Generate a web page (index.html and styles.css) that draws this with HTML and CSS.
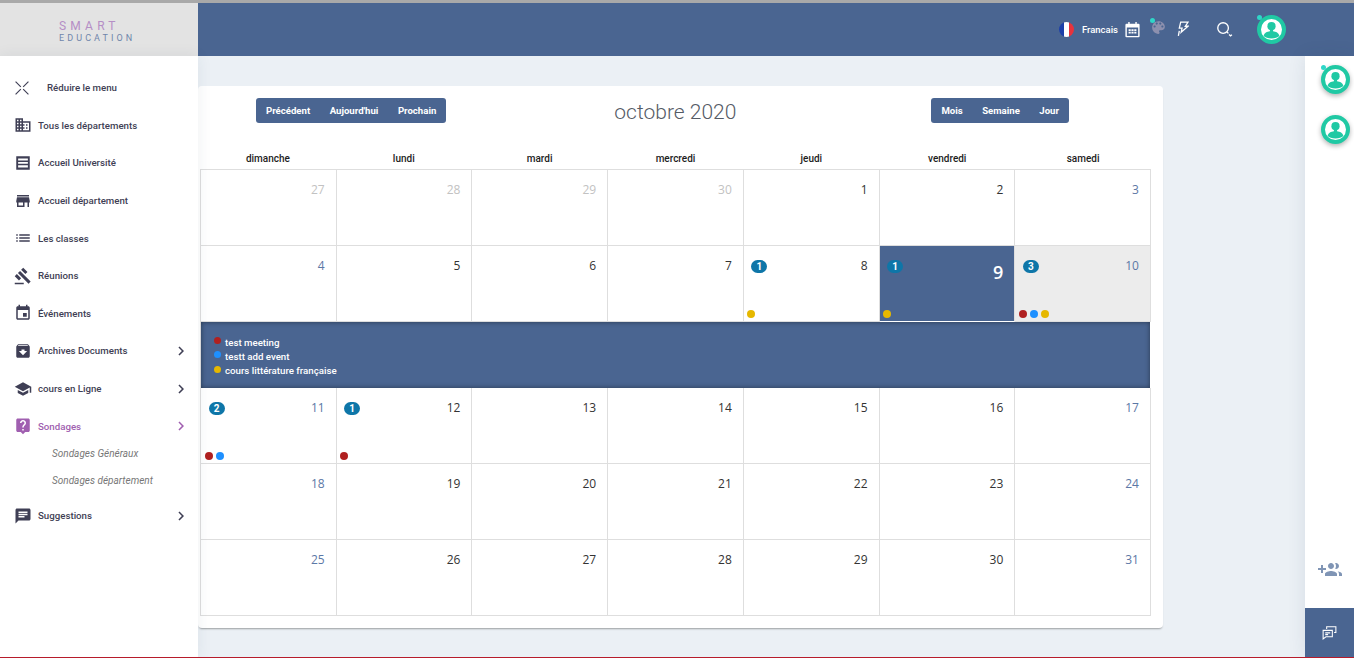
FILE: index.html
```html
<!DOCTYPE html>
<html lang="fr">
<head>
  <meta charset="UTF-8">
  <meta name="viewport" content="width=device-width, initial-scale=1.0">
  <title>Smart Education - Calendrier</title>
  <link rel="stylesheet" href="styles.css">
</head>
<body>
  <svg class="icon-defs" width="0" height="0">
    <symbol id="avatar" viewBox="0 0 24 24">
      <circle cx="12" cy="8.2" r="4.700"/>
      <path d="M3 19.500c.4-3.600 4.200-5 7.200-5.400v-1.600h3.600v1.600c3 .4 6.800 1.800 7.200 5.400-2 1.700-5 2.700-9 2.700s-7-1-9-2.700z"/>
    </symbol>
    <symbol id="chevron" viewBox="0 0 24 24">
      <path d="M8.590 16.590L13.170 12 8.590 7.410 10 6l6 6-6 6z"/>
    </symbol>
  </svg>

  <!-- Header -->
  <header class="topbar">
    <div class="logo">
      <span class="logo-smart">SMART</span>
      <span class="logo-edu">EDUCATION</span>
    </div>
    <div class="topbar-tools">
      <span class="flag"></span>
      <span class="lang">Francais</span>
      <svg class="tool tool-cal" viewBox="0 0 24 24"><path d="M6 1.500h2v2.500h8V1.500h2V4h2.500A1.500 1.500 0 0 1 22 5.500v16a1.500 1.500 0 0 1-1.500 1.500h-17A1.500 1.500 0 0 1 2 21.500v-16A1.500 1.500 0 0 1 3.500 4H6zM4 9v12h16V9zm2.500 2.500h3v2.500h-3zm4 0h3v2.500h-3zm4 0h3v2.500h-3zm-8 3.500h3v2.500h-3zm4 0h3v2.500h-3zm4 0h3v2.500h-3z" fill-rule="evenodd"/></svg>
      <span class="palette">
        <svg viewBox="0 0 24 24"><path d="M12 3c-4.970 0-9 4.030-9 9s4.030 9 9 9c.83 0 1.500-.67 1.500-1.500 0-.39-.15-.74-.39-1.010-.23-.26-.38-.61-.38-.99 0-.83.67-1.500 1.500-1.500H16c2.760 0 5-2.240 5-5 0-4.420-4.030-8-9-8zm-5.500 9c-.83 0-1.500-.67-1.500-1.500S5.670 9 6.500 9 8 9.670 8 10.500 7.330 12 6.500 12zm3-4C8.670 8 8 7.330 8 6.500S8.670 5 9.500 5s1.500.67 1.500 1.500S10.330 8 9.500 8zm5 0c-.83 0-1.500-.67-1.500-1.500S13.670 5 14.500 5s1.500.67 1.500 1.500S15.330 8 14.500 8zm3 4c-.83 0-1.500-.67-1.500-1.500S16.670 9 17.500 9s1.500.67 1.500 1.500-.67 1.500-1.500 1.500z"/></svg>
        <i class="online"></i>
      </span>
      <svg class="tool tool-bolt" viewBox="0 0 13 17" fill="none" stroke="#fff" stroke-width="1.400"><path d="M4 1h8L9 5.500h3L4.500 12l1-4.500H2.500zM2.500 10.500L1.500 16"/></svg>
      <svg class="tool tool-search" viewBox="0 0 24 24" fill="none" stroke="#fff" stroke-width="1.900"><circle cx="10" cy="10" r="7.500"/><path d="M15.500 15.500l2 2M18.500 19l2 2 2-1.500"/></svg>
      <span class="avatar avatar-top">
        <svg><use href="#avatar"/></svg>
        <i class="online"></i>
      </span>
    </div>
  </header>

  <div class="layout">
    <!-- Menu -->
    <aside class="sidebar">
      <a class="menu-item menu-toggle">
        <svg class="menu-icon" viewBox="0 0 24 24" fill="none" stroke="#3f3f55" stroke-width="2"><path d="M1 1l9 9M23 1l-9 9M1 23l9-9M23 23l-9-9"/></svg>
        <span>Réduire le menu</span>
      </a>
      <a class="menu-item">
        <svg class="menu-icon" viewBox="0 0 24 24"><path d="M12 7V3H2v18h20V7H12zM6 19H4v-2h2v2zm0-4H4v-2h2v2zm0-4H4V9h2v2zm0-4H4V5h2v2zm4 12H8v-2h2v2zm0-4H8v-2h2v2zm0-4H8V9h2v2zm0-4H8V5h2v2zm10 12h-8v-2h2v-2h-2v-2h2v-2h-2V9h8v10zm-2-8h-2v2h2v-2zm0 4h-2v2h2v-2z"/></svg>
        <span>Tous les départements</span>
      </a>
      <a class="menu-item">
        <svg class="menu-icon" viewBox="0 0 24 24"><path fill-rule="evenodd" d="M3 3h18v18H3zM5.500 6v2.500h13V6zm0 4.500V13h13v-2.500zm0 4.500v3h13v-3z"/></svg>
        <span>Accueil Université</span>
      </a>
      <a class="menu-item">
        <svg class="menu-icon" viewBox="0 0 24 24"><path d="M20 4H4v2h16V4zm1 10v-2l-1-5H4l-1 5v2h1v6h10v-6h4v6h2v-6h1zm-9 4H6v-4h6v4z"/></svg>
        <span>Accueil département</span>
      </a>
      <a class="menu-item">
        <svg class="menu-icon" viewBox="0 0 24 24"><path d="M3 13h2v-2H3v2zm0 4h2v-2H3v2zm0-8h2V7H3v2zm4 4h14v-2H7v2zm0 4h14v-2H7v2zM7 7v2h14V7H7z"/></svg>
        <span>Les classes</span>
      </a>
      <a class="menu-item">
        <svg class="menu-icon" viewBox="0 0 24 24"><path d="M1 21h12v2H1zM5.245 8.070l2.830-2.827 14.140 14.142-2.828 2.828zM12.317 1l5.657 5.656-2.830 2.830-5.654-5.660zM3.825 9.485l5.657 5.657-2.828 2.828-5.657-5.657z"/></svg>
        <span>Réunions</span>
      </a>
      <a class="menu-item">
        <svg class="menu-icon" viewBox="0 0 24 24"><path d="M17 12h-5v5h5v-5zM16 1v2H8V1H6v2H5c-1.110 0-1.990.9-1.990 2L3 19c0 1.100.89 2 2 2h14c1.100 0 2-.9 2-2V5c0-1.100-.9-2-2-2h-1V1h-2zm3 18H5V8h14v11z"/></svg>
        <span>Événements</span>
      </a>
      <a class="menu-item">
        <svg class="menu-icon" viewBox="0 0 24 24"><path d="M20.540 5.230l-1.390-1.680C18.880 3.210 18.470 3 18 3H6c-.47 0-.88.21-1.160.55L3.460 5.230C3.170 5.570 3 6.020 3 6.500V19c0 1.100.9 2 2 2h14c1.100 0 2-.9 2-2V6.500c0-.48-.17-.93-.46-1.270zM12 17.500L6.500 12H10v-2h4v2h3.500L12 17.500zM5.120 5l.81-1h12l.94 1H5.120z"/></svg>
        <span>Archives Documents</span>
        <svg class="chevron"><use href="#chevron"/></svg>
      </a>
      <a class="menu-item">
        <svg class="menu-icon" viewBox="0 0 24 24"><path d="M5 13.180v4L12 21l7-3.820v-4L12 17l-7-3.820zM12 3L1 9l11 6 9-4.910V17h2V9L12 3z"/></svg>
        <span>cours en Ligne</span>
        <svg class="chevron"><use href="#chevron"/></svg>
      </a>
      <a class="menu-item active">
        <svg class="menu-icon" viewBox="0 0 24 24"><path d="M19 2H5c-1.110 0-2 .9-2 2v14c0 1.100.89 2 2 2h4l3 3 3-3h4c1.100 0 2-.9 2-2V4c0-1.100-.9-2-2-2zm-6 16h-2v-2h2v2zm2.070-7.750l-.9.92C13.450 11.900 13 12.500 13 14h-2v-.5c0-1.100.45-2.100 1.170-2.830l1.240-1.260c.37-.36.59-.86.59-1.410 0-1.100-.9-2-2-2s-2 .9-2 2H8c0-2.210 1.790-4 4-4s4 1.790 4 4c0 .88-.36 1.680-.93 2.250z"/></svg>
        <span>Sondages</span>
        <svg class="chevron"><use href="#chevron"/></svg>
      </a>
      <div class="submenu">
        <a>Sondages Généraux</a>
        <a>Sondages département</a>
      </div>
      <a class="menu-item">
        <svg class="menu-icon" viewBox="0 0 24 24"><path d="M20 2H4c-1.100 0-1.990.9-1.990 2L2 22l4-4h14c1.100 0 2-.9 2-2V4c0-1.100-.9-2-2-2zM6 9h12v2H6V9zm8 5H6v-2h8v2zm4-6H6V6h12v2z"/></svg>
        <span>Suggestions</span>
        <svg class="chevron"><use href="#chevron"/></svg>
      </a>
    </aside>

    <main class="content">
      <section class="card">
        <div class="cal-toolbar">
          <div class="btn-group">
            <button>Précédent</button>
            <button>Aujourd'hui</button>
            <button>Prochain</button>
          </div>
          <h2 class="cal-title">octobre 2020</h2>
          <div class="btn-group">
            <button>Mois</button>
            <button>Semaine</button>
            <button>Jour</button>
          </div>
        </div>

        <div class="cal-days">
          <span>dimanche</span><span>lundi</span><span>mardi</span><span>mercredi</span><span>jeudi</span><span>vendredi</span><span>samedi</span>
        </div>

        <div class="cal-grid">
          <div class="cell muted"><b class="num">27</b></div>
          <div class="cell muted"><b class="num">28</b></div>
          <div class="cell muted"><b class="num">29</b></div>
          <div class="cell muted"><b class="num">30</b></div>
          <div class="cell"><b class="num">1</b></div>
          <div class="cell"><b class="num">2</b></div>
          <div class="cell weekend"><b class="num">3</b></div>

          <div class="cell weekend"><b class="num">4</b></div>
          <div class="cell"><b class="num">5</b></div>
          <div class="cell"><b class="num">6</b></div>
          <div class="cell"><b class="num">7</b></div>
          <div class="cell">
            <span class="badge">1</span><b class="num">8</b>
            <div class="dots"><i class="dot yellow"></i></div>
          </div>
          <div class="cell today">
            <span class="badge">1</span><b class="num">9</b>
            <div class="dots"><i class="dot yellow"></i></div>
          </div>
          <div class="cell weekend selected">
            <span class="badge">3</span><b class="num">10</b>
            <div class="dots"><i class="dot red"></i><i class="dot blue"></i><i class="dot yellow"></i></div>
          </div>

          <div class="event-panel">
            <div class="event-line"><i class="dot red"></i>test meeting</div>
            <div class="event-line"><i class="dot blue"></i>testt add event</div>
            <div class="event-line"><i class="dot yellow"></i>cours littérature française</div>
          </div>

          <div class="cell weekend">
            <span class="badge">2</span><b class="num">11</b>
            <div class="dots"><i class="dot red"></i><i class="dot blue"></i></div>
          </div>
          <div class="cell">
            <span class="badge">1</span><b class="num">12</b>
            <div class="dots"><i class="dot red"></i></div>
          </div>
          <div class="cell"><b class="num">13</b></div>
          <div class="cell"><b class="num">14</b></div>
          <div class="cell"><b class="num">15</b></div>
          <div class="cell"><b class="num">16</b></div>
          <div class="cell weekend"><b class="num">17</b></div>

          <div class="cell weekend"><b class="num">18</b></div>
          <div class="cell"><b class="num">19</b></div>
          <div class="cell"><b class="num">20</b></div>
          <div class="cell"><b class="num">21</b></div>
          <div class="cell"><b class="num">22</b></div>
          <div class="cell"><b class="num">23</b></div>
          <div class="cell weekend"><b class="num">24</b></div>

          <div class="cell weekend"><b class="num">25</b></div>
          <div class="cell"><b class="num">26</b></div>
          <div class="cell"><b class="num">27</b></div>
          <div class="cell"><b class="num">28</b></div>
          <div class="cell"><b class="num">29</b></div>
          <div class="cell"><b class="num">30</b></div>
          <div class="cell weekend"><b class="num">31</b></div>
        </div>
      </section>
    </main>

    <!-- Contacts -->
    <aside class="contacts">
      <span class="avatar">
        <svg><use href="#avatar"/></svg>
        <i class="online"></i>
      </span>
      <span class="avatar">
        <svg><use href="#avatar"/></svg>
      </span>
      <svg class="add-group" viewBox="0 0 24 24"><path d="M8 10H5V7H3v3H0v2h3v3h2v-3h3v-2zm10 1c1.660 0 2.990-1.340 2.990-3S19.660 5 18 5c-.32 0-.63.05-.91.14.57.81.9 1.790.9 2.860s-.34 2.040-.9 2.860c.28.09.59.14.91.14zm-5 0c1.660 0 2.990-1.340 2.990-3S14.660 5 13 5s-3 1.340-3 3 1.340 3 3 3zm6.620 2.160c.83.73 1.380 1.660 1.380 2.840v2h3v-2c0-1.540-2.370-2.490-4.380-2.840zM13 13c-2 0-6 1-6 3v2h12v-2c0-2-4-3-6-3z"/></svg>
      <div class="chat-btn">
        <svg viewBox="0 0 24 24" fill="none" stroke="#fff" stroke-width="1.500"><path d="M8 7V4h13v8l-2.500 0"/><path d="M3 9h13v9H7l-4 3z" fill="#4a6591"/><path d="M6 12.500h7M6 15h4"/></svg>
      </div>
    </aside>
  </div>
</body>
</html>
```

FILE: styles.css
```css
* {
  box-sizing: border-box;
}

html,
body {
  height: 100%;
}

body {
  margin: 0;
  display: flex;
  flex-direction: column;
  overflow: hidden;
  border-top: 3px solid #a9a9a9;
  border-bottom: 1px solid #b71c2b;
  background: #ebf0f5;
  font-family: Roboto, "Liberation Sans", sans-serif;
  font-size: 10px;
}

.icon-defs {
  position: absolute;
}

/* Header */
.topbar {
  display: flex;
  justify-content: space-between;
  height: 53px;
  background: #4a6591;
  flex-shrink: 0;
}

.logo {
  width: 198px;
  padding: 16px 0 0 59px;
  display: flex;
  flex-direction: column;
  background: #e3e3e3;
}

.logo-smart {
  font-size: 12px;
  line-height: 14px;
  letter-spacing: 4.200px;
  color: #b58ec6;
}

.logo-edu {
  font-size: 9px;
  line-height: 11px;
  letter-spacing: 3.100px;
  color: #6f86ab;
}

.topbar-tools {
  display: flex;
  align-items: center;
  padding: 0 68px 1px 0;
  color: #fff;
}

.flag {
  width: 15px;
  height: 15px;
  border-radius: 50%;
  background: linear-gradient(90deg, #1c3fa8 33%, #fff 33%, #fff 66%, #e8323c 66%);
}

.lang {
  margin-left: 8px;
  font-size: 9.500px;
  font-weight: 500;
}

.tool {
  fill: #fff;
  flex-shrink: 0;
}

.tool-cal {
  width: 17px;
  height: 17px;
  margin-left: 6px;
}

.palette {
  position: relative;
  width: 17px;
  height: 17px;
  margin: -3px 0 0 9px;
  fill: #8d90ae;
}

.palette svg {
  width: 17px;
  height: 17px;
}

.palette .online {
  top: -1px;
  left: 0;
}

.tool-bolt {
  width: 12px;
  height: 16px;
  margin-left: 10px;
  fill: none;
}

.tool-search {
  width: 17px;
  height: 17px;
  margin-left: 27px;
  fill: none;
}

.avatar {
  position: relative;
  display: block;
  width: 29px;
  height: 29px;
  padding: 4px;
  border: 4px solid #20c9a4;
  border-radius: 50%;
  background: #fff;
  fill: #20c9a4;
  box-shadow: 0 2px 5px rgba(0, 0, 0, 0.3);
}

.avatar svg {
  display: block;
  width: 21px;
  height: 21px;
  margin: -4px;
}

.avatar-top {
  margin-left: 24px;
  box-shadow: none;
}

.online {
  position: absolute;
  top: -4px;
  left: -4px;
  width: 5px;
  height: 5px;
  border-radius: 50%;
  background: #2fd6c8;
}

.layout {
  flex: 1;
  display: flex;
  min-height: 0;
}

/* Menu */
.sidebar {
  position: relative;
  z-index: 2;
  width: 198px;
  padding-top: 13px;
  background: #fff;
  box-shadow: 0 0 14px rgba(40, 60, 90, 0.08);
  flex-shrink: 0;
}

.menu-item {
  display: flex;
  align-items: center;
  height: 37.600px;
  padding: 0 8px 0 14px;
  font-size: 9.700px;
  font-weight: 500;
  color: #3f3f55;
}

.menu-icon {
  width: 18px;
  height: 18px;
  margin-right: 6px;
  fill: #3f3f55;
  flex-shrink: 0;
}

.menu-toggle .menu-icon {
  width: 14px;
  height: 14px;
  margin: 0 18px 0 1px;
}

.chevron {
  width: 18px;
  height: 18px;
  margin-left: auto;
  fill: #3f3f55;
}

.menu-item.active {
  color: #a05fb0;
}

.active .menu-icon,
.active .chevron {
  fill: #a05fb0;
}

.submenu {
  display: flex;
  flex-direction: column;
  margin: -4px 0 2px;
  padding-left: 52px;
  font-style: italic;
  color: #777;
}

.submenu a {
  height: 27px;
  line-height: 26px;
}

/* Calendar */
.content {
  flex: 1;
  min-width: 0;
  padding: 30px 142px 0 0;
}

.card {
  height: 542px;
  padding: 12px 12px 0 2px;
  border-radius: 4px;
  background: #fff;
  box-shadow: 0 2px 2px -1px rgba(0, 0, 0, 0.35);
}

.cal-toolbar {
  display: flex;
  align-items: center;
  height: 25px;
  padding: 0 82px 0 56px;
}

.btn-group {
  display: flex;
  height: 25px;
  padding: 0 10px;
  gap: 19.500px;
  border-radius: 3px;
  background: #4a6591;
}

.btn-group button {
  padding: 0;
  border: 0;
  background: none;
  font: 700 9.600px Roboto, sans-serif;
  color: #fff;
}

.cal-title {
  flex: 1;
  margin: 2px 0 0;
  padding-right: 27px;
  text-align: center;
  font-size: 21px;
  font-weight: 300;
  color: #555b66;
}

.cal-days {
  display: grid;
  grid-template-columns: repeat(7, 1fr);
  height: 21px;
  margin-top: 25px;
  padding-top: 5px;
  text-align: center;
  font-weight: 500;
  color: #1d1d1d;
}

.cal-grid {
  display: grid;
  grid-template-columns: repeat(7, 1fr);
  border-top: 1px solid #dedede;
  border-left: 1px solid #dedede;
}

.cell {
  position: relative;
  height: 76px;
  padding: 12px 11px 0 7.500px;
  display: flex;
  align-items: flex-start;
  border-right: 1px solid #dedede;
  border-bottom: 1px solid #dedede;
}

.num {
  margin-left: auto;
  font: 400 12px/16px "Open Sans", sans-serif;
  color: #333;
}

.muted .num {
  color: #c2c2c2;
}

.weekend .num {
  color: #5c78a6;
}

.today {
  background: #4a6591;
  border-bottom-color: #fff;
}

.today .num {
  font-size: 18px;
  line-height: 22px;
  font-weight: 600;
  color: #fff;
  margin-top: 3px;
}

.selected {
  background: #ececec;
}

.badge {
  width: 16px;
  height: 13px;
  margin-top: 2px;
  border-radius: 7px;
  background: #0e76a8;
  text-align: center;
  font-size: 10px;
  line-height: 13px;
  font-weight: 700;
  color: #fff;
}

.dots {
  position: absolute;
  left: 3.500px;
  bottom: 3px;
  display: flex;
  gap: 3px;
}

.dot {
  display: block;
  width: 8px;
  height: 8px;
  border-radius: 50%;
}

.red {
  background: #b02020;
}

.blue {
  background: #1e90ff;
}

.yellow {
  background: #e6b800;
}

.event-panel {
  grid-column: 1 / -1;
  height: 66px;
  margin-right: 1px;
  padding: 13px 13px 0;
  background: #4a6591;
  box-shadow: inset 0 0 5px rgba(0, 0, 0, 0.45);
  font-size: 9.700px;
  font-weight: 500;
  color: #fff;
}

.event-line {
  display: flex;
  align-items: center;
  gap: 4px;
  height: 14.300px;
}

.event-line .dot {
  width: 7px;
  height: 7px;
  margin-top: -3px;
}

/* Contacts */
.contacts {
  position: relative;
  z-index: 1;
  width: 49px;
  display: flex;
  flex-direction: column;
  align-items: center;
  gap: 21px;
  padding-top: 9px;
  background: #fff;
  box-shadow: 0 0 18px rgba(40, 60, 90, 0.1);
  flex-shrink: 0;
}

.contacts .avatar {
  margin-left: 11px;
  flex-shrink: 0;
}

.add-group {
  width: 24px;
  height: 24px;
  margin: auto 0 17px;
  fill: #8095b5;
  flex-shrink: 0;
}

.chat-btn {
  align-self: stretch;
  display: flex;
  align-items: center;
  justify-content: center;
  height: 49px;
  margin-top: -12px;
  background: #4a6591;
  flex-shrink: 0;
}

.chat-btn svg {
  width: 17px;
  height: 17px;
}
```
